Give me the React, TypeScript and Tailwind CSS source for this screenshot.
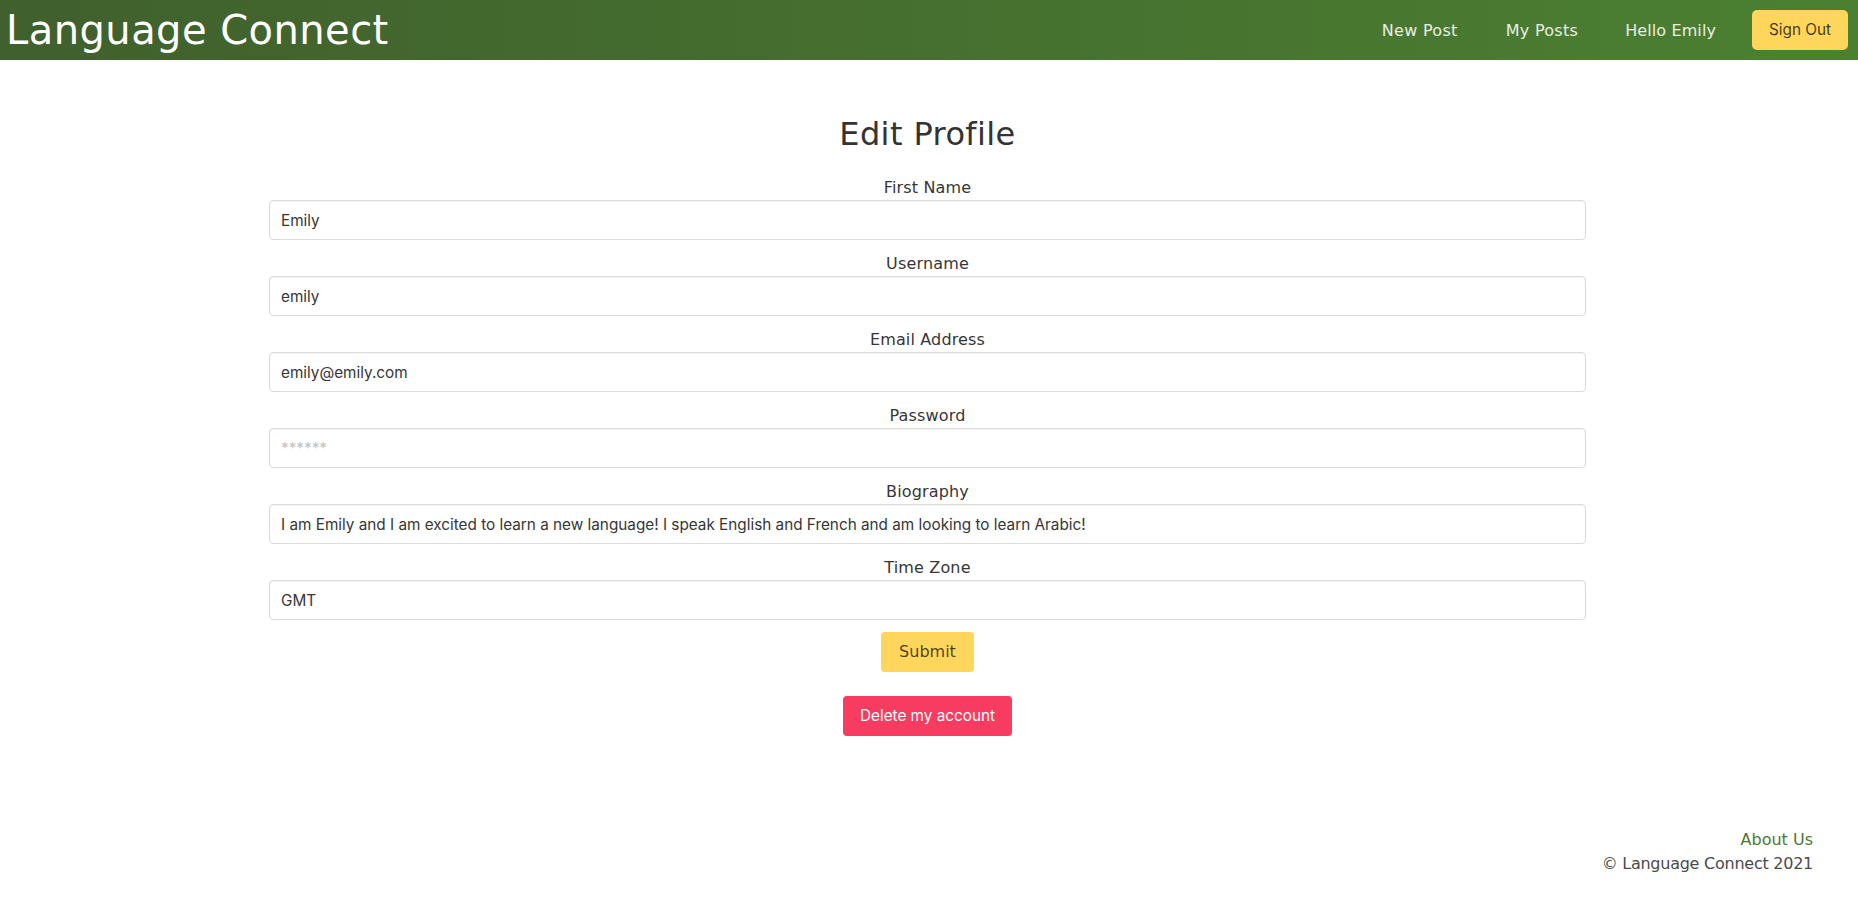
import React from "react";

const mont = { fontFamily: '"DejaVu Sans", sans-serif' };
const sys = { fontFamily: 'Inter, "Noto Sans", sans-serif' };

const fields = [
  { label: "First Name", value: "Emily" },
  { label: "Username", value: "emily" },
  { label: "Email Address", value: "emily@emily.com" },
  { label: "Password", value: "", placeholder: "******" },
  {
    label: "Biography",
    value:
      "I am Emily and I am excited to learn a new language! I speak English and French and am looking to learn Arabic!",
  },
  { label: "Time Zone", value: "GMT" },
];

export default function App() {
  return (
    <div className="min-h-screen bg-white text-[#363636]" style={mont}>
      <header className="h-[60px] flex items-center justify-between bg-gradient-to-r from-[#40602d] to-[#4b8031]">
        <div className="pl-[6px] text-[40px] leading-[48px] tracking-[0.45px] text-white">Language Connect</div>
        <nav className="flex items-center h-full pr-[10px]">
          <a className="text-[16px] leading-[24px] tracking-[0.3px] text-[#e8eee4] mr-[48px] mt-[2px]">New Post</a>
          <a className="text-[16px] leading-[24px] tracking-[0.3px] text-[#e8eee4] mr-[47px] mt-[2px]">My Posts</a>
          <a className="text-[16px] leading-[24px] tracking-[0.1px] text-[#e8eee4] mr-[36px] mt-[2px]">Hello Emily</a>
          <button
            className="w-[96px] h-[40px] rounded-[5px] bg-[#ffd65c] text-[15.3px] text-[rgba(0,0,0,0.75)] flex items-center justify-center"
            style={sys}
          >
            Sign Out
          </button>
        </nav>
      </header>

      <main className="ml-[269px] w-[1317px] pt-[56px] flex flex-col items-center">
        <h1 className="text-[32px] leading-[36px] tracking-[0.4px] text-[#333] mb-[24px]">Edit Profile</h1>
        <form className="w-full flex flex-col">
          {fields.map((f) => (
            <div key={f.label} className="mb-[12px] flex flex-col">
              <label className="text-center text-[16px] leading-[24px] tracking-[0.15px] text-[#363636]">{f.label}</label>
              <input
                readOnly
                value={f.value}
                placeholder={f.placeholder}
                type={f.label === "Password" ? "password" : "text"}
                className="h-[40px] w-full rounded-[4px] border border-[#dbdbdb] px-[11px] text-[15.3px] text-[#363636] placeholder:text-[#c2c2c2] shadow-[inset_0_1px_2px_rgba(10,10,10,0.05)] outline-none"
                style={sys}
              />
            </div>
          ))}
          <div className="flex justify-center">
            <button
              type="button"
              className="h-[40px] px-[18px] rounded-[4px] bg-[#ffd65c] text-[16px] text-[rgba(0,0,0,0.72)]"
            >
              Submit
            </button>
          </div>
        </form>
        <button
          className="mt-[24px] w-[169px] h-[40px] rounded-[4px] bg-[#f83c61] text-white text-[15.3px] flex items-center justify-center"
          style={sys}
        >
          Delete my account
        </button>
      </main>

      <footer className="mt-[92px] pr-[45px] flex flex-col items-end text-[16px] leading-[24px] pb-[27px]">
        <a className="text-[#4a7a30]">About Us</a>
        <div className="text-[#4a4a4a] tracking-[-0.25px]">© Language Connect 2021</div>
      </footer>
    </div>
  );
}
